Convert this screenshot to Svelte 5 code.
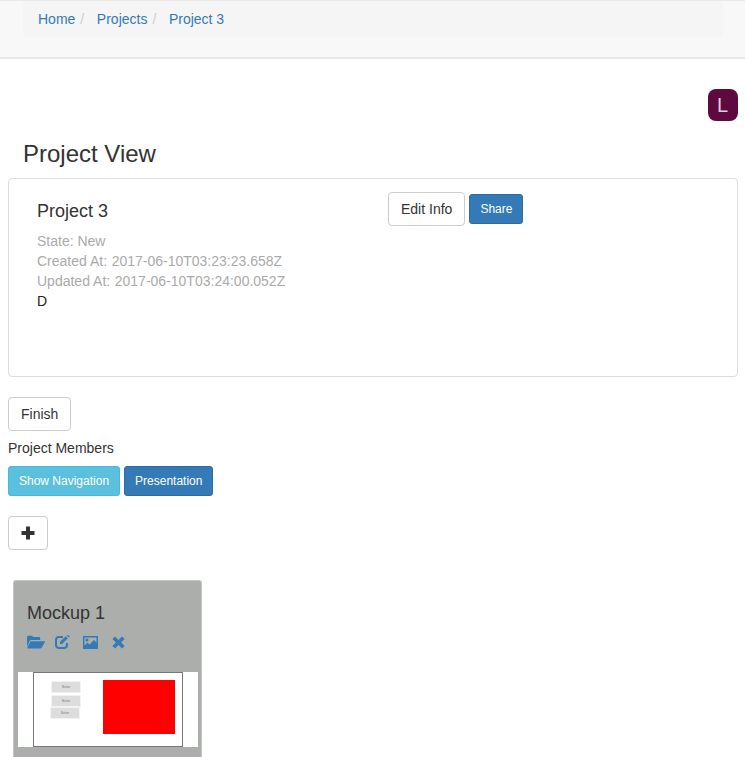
<script>
    const crumbs = ["Home", "Projects", "Project 3"];
    const meta = [
        { label: "State:", value: "New" },
        { label: "Created At:", value: "2017-06-10T03:23:23.658Z", stamp: true },
        { label: "Updated At:", value: "2017-06-10T03:24:00.052Z", stamp: true }
    ];
    const slotTops = [9, 23, 35];
</script>

<nav class="navbar">
    <ol class="breadcrumb">
        {#each crumbs as crumb, i}
            <li>
                <a href="#top">{crumb}</a>
                {#if i < crumbs.length - 1}<span class="sep">/</span>{/if}
            </li>
        {/each}
    </ol>
</nav>

<div class="userRow">
    <div class="avatar">L</div>
</div>

<h3 class="pageTitle">Project View</h3>

<section class="panel">
    <div class="info">
        <h4>Project 3</h4>
        {#each meta as line}
            <div class="muted">{line.label} <span class:stamp={line.stamp}>{line.value}</span></div>
        {/each}
        <div class="desc">D</div>
    </div>
    <div class="panelActions">
        <button class="btn">Edit Info</button>
        <button class="btn small primary">Share</button>
    </div>
</section>

<div class="body">
    <button class="btn">Finish</button>
    <div class="members">Project Members</div>
    <div class="btnRow">
        <button class="btn small info-btn">Show Navigation</button>
        <button class="btn small primary">Presentation</button>
    </div>
    <button class="btn plus" aria-label="Add">
        <svg width="14" height="14" viewBox="0 0 14 14"><path d="M5 .5h4v4.500h4.500v4H9v4.500H5V9H.5V5H5z" fill="#333"/></svg>
    </button>

    <article class="card">
        <h4>Mockup 1</h4>
        <div class="icons">
            <svg width="18" height="14" viewBox="0 0 18 14"><path d="M0 12V2.200C0 1.300.6.700 1.400.700h3c.8 0 1.300.6 1.500 1.200h6c.8 0 1.300.5 1.300 1.300V5H4.400C3.500 5 3 5.400 2.600 6z M3.500 6.300h14c.4 0 .6.300.4.700L14.800 12.600c-.3.500-.8.800-1.300.8H.8c-.5 0-.7-.3-.5-.7z" fill="#337ab7"/></svg>
            <svg width="15" height="14" viewBox="0 0 15 14"><path d="M12 8v2a3 3 0 0 1-3 3H4a3 3 0 0 1-3-3V5a3 3 0 0 1 3-3h4" fill="none" stroke="#337ab7" stroke-width="2"/><path d="M5 6.800 10.800 1.200l2 2L7 8.900H5z M11.800.4 13.800 2.400 14.800 1.400 13 0z" fill="#337ab7"/></svg>
            <svg width="15" height="13" viewBox="0 0 15 13"><path fill-rule="evenodd" d="M0 0h15v13H0z M1.500 9.500l3-3 2 2 4.500-4.500 2.500 2.500V1.500H1.500z M4 2.500a1.500 1.500 0 1 1 0 3 1.500 1.500 0 0 1 0-3z" fill="#337ab7"/></svg>
            <svg class="close" width="13" height="13" viewBox="0 0 13 13"><path d="M3 .4 6.500 3.900 10 .4 12.600 3 9.100 6.500 12.600 10 10 12.600 6.500 9.100 3 12.600 .4 10 3.900 6.500 .4 3z" fill="#337ab7"/></svg>
        </div>
        <div class="preview">
            <div class="canvas">
                {#each slotTops as top, i}
                    <div class="slot" style="top: {top}px; left: {i === 2 ? 17 : 18}px">Button</div>
                {/each}
                <div class="shape"></div>
            </div>
        </div>
    </article>
</div>

<style>
    :global(body) {
        margin: 0;
        font-family: "Liberation Sans", Arial, sans-serif;
        font-size: 14px;
        line-height: 20px;
        color: #333;
        background: #fff;
    }

    .navbar {
        height: 56px;
        background-color: #f8f8f8;
        border-top: 1px solid #e7e7e7;
        border-bottom: 2px solid #e7e7e7;
        padding: 0 22px 0 23px;
    }

    .breadcrumb {
        list-style: none;
        display: flex;
        margin: 0;
        height: 36px;
        box-sizing: border-box;
        padding: 8px 15px;
        background-color: #f5f5f5;
        border-radius: 4px;
    }

    .breadcrumb li {
        display: flex;
        margin-right: 12.6px;
    }

    .breadcrumb a {
        color: #337ab7;
        text-decoration: none;
    }

    .sep {
        color: #ccc;
        margin-left: 5px;
    }

    .userRow {
        display: flex;
        justify-content: flex-end;
        padding: 30px 7px 0 0;
    }

    .avatar {
        width: 30px;
        height: 32px;
        border-radius: 8px;
        background-color: #5f0a3f;
        color: #d9cfe8;
        font-size: 20px;
        line-height: 32px;
        text-align: center;
        text-indent: -1px;
    }

    .pageTitle {
        margin: 19px 0 0 23px;
        font-size: 24px;
        font-weight: 400;
        line-height: 27px;
    }

    .panel {
        display: flex;
        margin: 11px 7px 0 8px;
        height: 199px;
        box-sizing: border-box;
        border: 1px solid #ddd;
        border-radius: 4px;
        padding: 13px 28px;
    }

    .info {
        width: 351px;
        flex: none;
    }

    h4 {
        margin: 9px 0 10px;
        font-size: 18px;
        font-weight: 400;
        line-height: 20px;
    }

    .muted {
        color: #aaa;
    }

    .stamp {
        margin-left: 0.7px;
    }

    .desc {
        color: #222;
    }

    .panelActions {
        display: flex;
        align-items: center;
        gap: 4px;
        height: 34px;
    }

    .btn {
        display: block;
        height: 34px;
        box-sizing: border-box;
        padding: 6px 12px;
        background: #fff;
        border: 1px solid #ccc;
        border-radius: 4px;
        color: #333;
        font: inherit;
    }

    .btn.small {
        height: 30px;
        padding: 5px 10px;
        font-size: 12px;
        line-height: 18px;
        border-radius: 3px;
        color: #fff;
    }

    .primary {
        background-color: #337ab7;
        border-color: #2e6da4;
    }

    .info-btn {
        background-color: #5bc0de;
        border-color: #46b8da;
    }

    .body {
        padding: 20px 8px 0;
    }

    .members {
        margin-top: 7px;
    }

    .btnRow {
        display: flex;
        gap: 4px;
        margin-top: 8px;
    }

    .plus {
        width: 40px;
        margin-top: 20px;
        padding: 0;
    }

    .plus svg {
        display: block;
        margin: 0 auto;
    }

    .card {
        width: 189px;
        height: 177px;
        box-sizing: border-box;
        margin: 30px 0 0 5px;
        padding: 22px 3px 0 4px;
        background-color: #abaeaa;
        border: 1px solid #c4c6c3;
        border-bottom: none;
        border-radius: 3px 3px 0 0;
        color: #333;
    }

    .card h4 {
        margin: 0 0 0 9px;
        line-height: 20px;
    }

    .icons {
        display: grid;
        grid-template-columns: repeat(4, 28px);
        align-items: center;
        margin: 11px 0 0 9px;
        height: 16px;
    }

    .icons svg {
        display: block;
    }

    .icons .close {
        margin-left: 1px;
    }

    .preview {
        margin-top: 22px;
        height: 75px;
        background: #fff;
        padding: 0 15px;
    }

    .canvas {
        position: relative;
        height: 75px;
        box-sizing: border-box;
        border: 1px solid #777;
        overflow: hidden;
    }

    .slot {
        position: absolute;
        width: 28px;
        height: 10px;
        background: #ddd;
        outline: 1px solid #f2f2f2;
        color: #777;
        font-size: 2.8px;
        line-height: 10px;
        text-align: center;
    }

    .shape {
        position: absolute;
        left: 69px;
        top: 7px;
        width: 72px;
        height: 54px;
        background: #f00;
    }
</style>
